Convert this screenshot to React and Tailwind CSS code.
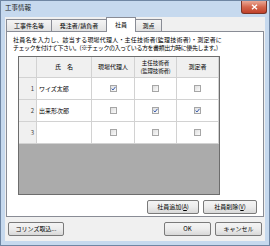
import React from "react";

function Check({ checked }) {
  return (
    <div className="w-[7px] h-[7px] border border-[#a6a6a6] bg-gradient-to-br from-[#dedede] to-[#fbfbfb] flex items-center justify-center">
      {checked && (
        <svg width="5" height="5" viewBox="0 0 5 5">
          <path d="M0.6 2.6 L2 4 L4.5 0.8" fill="none" stroke="#3a5eb0" strokeWidth="1" />
        </svg>
      )}
    </div>
  );
}

function Btn({ className, children }) {
  return (
    <div
      className={`h-[14px] border border-[#7a7a7a] rounded-[2px] bg-gradient-to-b from-[#f4f4f4] via-[#ececec] to-[#d8d8d8] flex items-center justify-center text-[6px] leading-none ${className}`}
    >
      {children}
    </div>
  );
}

const rows = [
  { no: 1, name: "ワイズ太郎", a: true, b: false, c: false },
  { no: 2, name: "出来形次郎", a: false, b: true, c: true },
  { no: 3, name: "", a: false, b: false, c: false },
];

export default function App() {
  return (
    <div className="w-[270px] h-[246px] bg-[#c6d9ee] border border-[#6f86a3] flex flex-col overflow-hidden text-black font-['Meiryo','Noto_Sans_CJK_JP',sans-serif]">
      {/* title bar */}
      <div className="h-[16px] flex items-start justify-between pl-[4px] pr-[2px]">
        <span className="mt-[3px] text-[6.5px] leading-none text-[#1a1a1a]">工事情報</span>
        <div className="w-[26px] h-[13px] rounded-b-[3px] border border-t-0 border-[#7a3326] bg-gradient-to-b from-[#e9a896] via-[#d4664c] to-[#c0402a] flex items-center justify-center">
          <svg width="7" height="6" viewBox="0 0 7 6">
            <path d="M1 0.8 L6 5.2 M6 0.8 L1 5.2" stroke="white" strokeWidth="1.4" />
          </svg>
        </div>
      </div>

      {/* client area */}
      <div className="flex-1 mx-[4px] mb-[4px] bg-[#f0f0f0] flex flex-col">
        {/* tabs */}
        <div className="h-[14px] flex items-end pl-[1px] text-[6px] leading-none">
          <div className="w-[46px] h-[12px] border border-b-0 border-[#898c95] bg-gradient-to-b from-[#f5f5f5] to-[#e2e2e2] flex items-center justify-center">工事件名等</div>
          <div className="w-[55px] h-[12px] border border-b-0 border-l-0 border-[#898c95] bg-gradient-to-b from-[#f5f5f5] to-[#e2e2e2] flex items-center justify-center">発注者/請負者</div>
          <div className="w-[30px] h-[15px] -mb-[1px] -ml-[1px] border border-b-0 border-[#898c95] bg-white flex items-center justify-center relative z-10">社員</div>
          <div className="w-[26px] h-[12px] border border-b-0 border-l-0 border-[#898c95] bg-gradient-to-b from-[#f5f5f5] to-[#e2e2e2] flex items-center justify-center">測点</div>
        </div>

        {/* panel */}
        <div className="h-[186px] mx-[1px] border border-[#898c95] bg-white flex flex-col">
          <div className="pt-[4px] pl-[6px] flex flex-col text-[6px] leading-[7.5px]">
            <span className="tracking-[0.2px]">社員名を入力し、該当する現場代理人・主任技術者(監理技術者)・測定者に</span>
            <span className="tracking-[-0.45px]">チェックを付けて下さい。(※チェックの入っている方を書類出力時に優先します。)</span>
          </div>

          {/* table */}
          <div className="mt-[5px] ml-[11px] w-[202px] h-[139px] border border-[#6d6d6d] bg-[#ababab] flex flex-col text-[6px] leading-none">
            <div className="h-[21px] grid grid-cols-[18px_55px_43px_42px_42px] bg-[#f0f0f0]">
              <div className="border-r border-b border-[#d2d2d2]" />
              <div className="border-r border-b border-[#d2d2d2] flex items-center justify-center">氏　名</div>
              <div className="border-r border-b border-[#d2d2d2] flex items-center justify-center">現場代理人</div>
              <div className="border-r border-b border-[#d2d2d2] flex flex-col items-center justify-center text-[5.5px] leading-[8px]">
                <span>主任技術者</span>
                <span className="tracking-[-0.2px]">(監理技術者)</span>
              </div>
              <div className="border-r border-b border-[#d2d2d2] flex items-center justify-center">測定者</div>
            </div>
            {rows.map((r) => (
              <div key={r.no} className="h-[22px] grid grid-cols-[18px_55px_43px_42px_42px] bg-white">
                <div className="bg-[#f0f0f0] border-r border-b border-[#d2d2d2] flex items-center justify-end pr-[2px] text-[#444]">{r.no}</div>
                <div className="border-r border-b border-[#d2d2d2] flex items-center pl-[2px]">{r.name}</div>
                <div className="border-r border-b border-[#d2d2d2] flex items-center justify-center"><Check checked={r.a} /></div>
                <div className="border-r border-b border-[#d2d2d2] flex items-center justify-center"><Check checked={r.b} /></div>
                <div className="border-r border-b border-[#d2d2d2] flex items-center justify-center"><Check checked={r.c} /></div>
              </div>
            ))}
          </div>

          <div className="mt-[5px] flex justify-end gap-[4px] pr-[6px]">
            <Btn className="w-[52px]">
              <span>社員追加(<span className="underline">A</span>)</span>
            </Btn>
            <Btn className="w-[54px]">
              <span>社員削除(<span className="underline">V</span>)</span>
            </Btn>
          </div>
        </div>

        {/* bottom buttons */}
        <div className="flex-1 flex items-center px-[3px]">
          <Btn className="w-[56px]">コリンズ取込...</Btn>
          <div className="flex-1" />
          <Btn className="w-[47px]">OK</Btn>
          <Btn className="w-[47px] ml-[4px]">キャンセル</Btn>
        </div>
      </div>
    </div>
  );
}
